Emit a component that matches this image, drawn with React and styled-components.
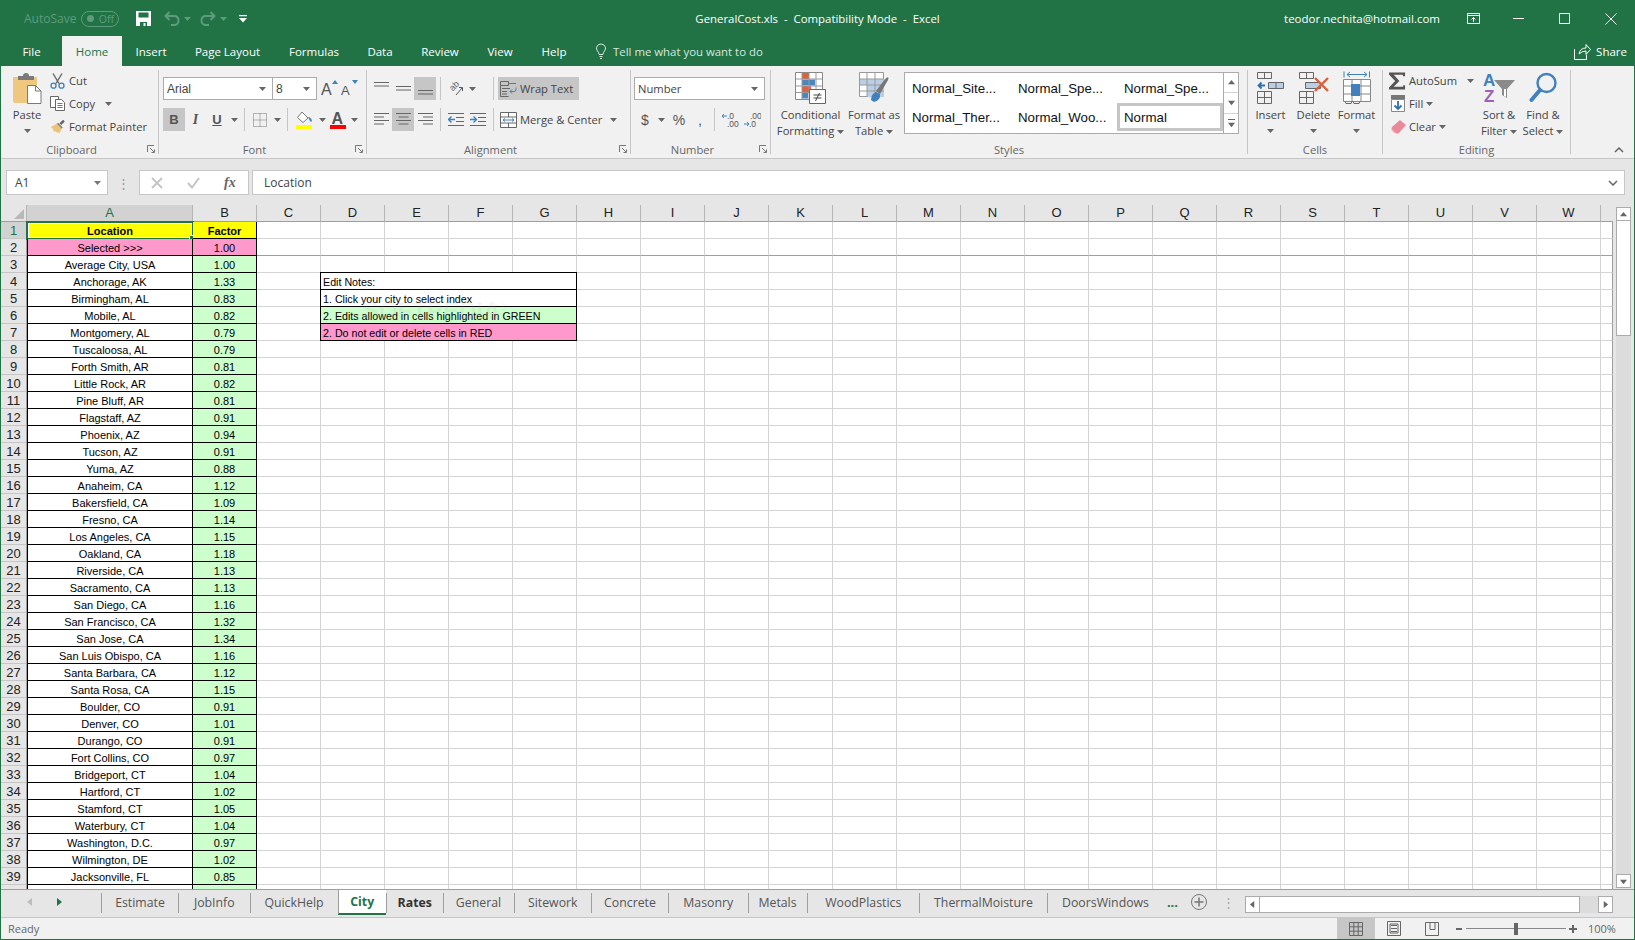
import React from 'react'
import styled, { createGlobalStyle } from 'styled-components'

/* ---------------------------------------DATA--------------------------------------- */

const cities = [
  ['Average City, USA', '1.00'], ['Anchorage, AK', '1.33'], ['Birmingham, AL', '0.83'], ['Mobile, AL', '0.82'],
  ['Montgomery, AL', '0.79'], ['Tuscaloosa, AL', '0.79'], ['Forth Smith, AR', '0.81'], ['Little Rock, AR', '0.82'],
  ['Pine Bluff, AR', '0.81'], ['Flagstaff, AZ', '0.91'], ['Phoenix, AZ', '0.94'], ['Tucson, AZ', '0.91'],
  ['Yuma, AZ', '0.88'], ['Anaheim, CA', '1.12'], ['Bakersfield, CA', '1.09'], ['Fresno, CA', '1.14'],
  ['Los Angeles, CA', '1.15'], ['Oakland, CA', '1.18'], ['Riverside, CA', '1.13'], ['Sacramento, CA', '1.13'],
  ['San Diego, CA', '1.16'], ['San Francisco, CA', '1.32'], ['San Jose, CA', '1.34'], ['San Luis Obispo, CA', '1.16'],
  ['Santa Barbara, CA', '1.12'], ['Santa Rosa, CA', '1.15'], ['Boulder, CO', '0.91'], ['Denver, CO', '1.01'],
  ['Durango, CO', '0.91'], ['Fort Collins, CO', '0.97'], ['Bridgeport, CT', '1.04'], ['Hartford, CT', '1.02'],
  ['Stamford, CT', '1.05'], ['Waterbury, CT', '1.04'], ['Washington, D.C.', '0.97'], ['Wilmington, DE', '1.02'],
  ['Jacksonville, FL', '0.85'], ['', ''],
]

const rows = [['Location', 'Factor'], ['Selected >>>', '1.00'], ...cities]
const letters = 'CDEFGHIJKLMNOPQRSTUVW'.split('')

const notes = {
  4: { text: 'Edit Notes:' },
  5: { text: '1. Click your city to select index' },
  6: { text: '2. Edits allowed in cells highlighted in GREEN', fill: '#ccffcc' },
  7: { text: '2. Do not edit or delete cells in RED', fill: '#ff99cc' },
}

const menuTabs = [
  ['File', 61], ['Home', 60, true], ['Insert', 58], ['Page Layout', 95], ['Formulas', 78], ['Data', 54],
  ['Review', 66], ['View', 54], ['Help', 54],
]

const sheetTabs = [
  ['Estimate', 77], ['JobInfo', 71.5], ['QuickHelp', 88], ['City', 48.5, 'active'], ['Rates', 56.5, 'bold'],
  ['General', 71], ['Sitework', 77.5], ['Concrete', 77], ['Masonry', 79.5], ['Metals', 59], ['WoodPlastics', 112.5],
  ['ThermalMoisture', 128], ['DoorsWindows', 116],
]

/* ---------------------------------------ICONS--------------------------------------- */

const Caret = ({ color = '#666' }) => (
  <svg width="7" height="4" viewBox="0 0 7 4"><path d="M0 0h7L3.5 4z" fill={color} /></svg>
)

const Launcher = () => (
  <svg width="8" height="8" viewBox="0 0 8 8" fill="none" stroke="#777">
    <path d="M.5 7V.5H7" /><path d="M3 3l4 4M4.5 7.5h3v-3" />
  </svg>
)

const SaveIcon = () => (
  <svg width="15" height="15" viewBox="0 0 15 15">
    <path d="M0 0h15v15H0z" fill="#fff" /><path d="M2.5 1.5h10v5h-10zM4 11h7v4H4z" fill="#217346" /><path d="M7.5 12h2v3h-2z" fill="#fff" />
  </svg>
)

const UndoIcon = ({ flip }) => (
  <svg width="16" height="15" viewBox="0 0 16 15" fill="none" stroke="#5f9b7d" strokeWidth="2" style={flip ? { transform: 'scaleX(-1)' } : undefined}>
    <path d="M5.5 1L1.5 5l4 4" /><path d="M2 5h8c3 0 4.5 2 4.5 4.5S12.5 14 10 14H7" />
  </svg>
)

const CustomizeIcon = () => (
  <svg width="8" height="8" viewBox="0 0 8 8"><path d="M0 0h8v1.3H0zM0 3h8L4 7.5z" fill="#fff" /></svg>
)

const PasteIcon = () => (
  <svg width="30" height="31" viewBox="0 0 30 31">
    <path d="M1 4h24v26H3q-2 0-2-2z" fill="#efc77f" />
    <path d="M6 3h5q0-3 3-3t3 3h5v4H6z" fill="#7a7a7a" />
    <path d="M15.5 12.5h8l5.5 5.5v12.5H15.5z" fill="#fff" stroke="#7a7a7a" />
    <path d="M23.5 12.5v5.5H29" fill="none" stroke="#7a7a7a" />
  </svg>
)

const ScissorsIcon = () => (
  <svg width="15" height="16" viewBox="0 0 15 16" fill="none">
    <path d="M3 .5l6 10M12 .5l-6 10" stroke="#666" strokeWidth="1.4" />
    <circle cx="3.5" cy="12.7" r="2.5" stroke="#3f80bd" strokeWidth="1.3" />
    <circle cx="11.5" cy="12.7" r="2.5" stroke="#3f80bd" strokeWidth="1.3" />
  </svg>
)

const CopyIcon = () => (
  <svg width="16" height="15" viewBox="0 0 16 15" fill="#fff" stroke="#666">
    <path d="M.5.5h8v11h-8z" />
    <path d="M5.5 3.5h6l3 3v8h-9z" />
    <path d="M7.5 7.5h5M7.5 9.5h5M7.5 11.5h5" stroke="#3f80bd" />
  </svg>
)

const PainterIcon = () => (
  <svg width="17" height="15" viewBox="0 0 17 15">
    <path d="M10 4l3-3q1-1 2 0t0 2l-3 3z" fill="#666" />
    <path d="M1 8l7-4 5 5-3 5.5-3-1-1.5-1L4 13 3.5 10.5z" fill="#ecc27a" />
    <path d="M7.5 4.5l1-1 5 5-1 1z" fill="#777" />
  </svg>
)

const LetterIcon = ({ size, up }) => (
  <svg width="18" height="17" viewBox="0 0 18 17">
    <text x="0" y="15" fontFamily="Liberation Sans" fontSize={size} fill="#555">A</text>
    <path d={up ? 'M11 4l3-4 3 4z' : 'M11 0h6l-3 4z'} fill="#3f80bd" />
  </svg>
)

const BorderIcon = () => (
  <svg width="14" height="14" viewBox="0 0 14 14" fill="none" stroke="#777" strokeDasharray="1 1">
    <path d="M.5.5h13v13H.5zM7 .5v13M.5 7h13" />
  </svg>
)

const FillIcon = () => (
  <svg width="17" height="18" viewBox="0 0 17 18">
    <path d="M6 1l6 6-5 4.5L1.5 6.5z" fill="#fff" stroke="#777" />
    <path d="M12 6q3 0 4 4-1 1.5-2 0z" fill="#3f80bd" />
    <path d="M0 14h16v4H0z" fill="#ffff00" />
  </svg>
)

const FontColorIcon = () => (
  <svg width="16" height="18" viewBox="0 0 16 18">
    <text x="1.5" y="13" fontFamily="Liberation Sans" fontWeight="700" fontSize="16" fill="#555">A</text>
    <path d="M0 14h16v4H0z" fill="#ff0000" />
  </svg>
)

const LinesIcon = ({ widths, top = 0 }) => (
  <svg width="15" height="16" viewBox="0 0 15 16" stroke="#666">
    {widths.map((w, i) => (
      <path key={i} d={`M${(15 - w[0]) * w[1]} ${top + i * 3.5 + 0.5}h${w[0]}`} />
    ))}
  </svg>
)

const OrientationIcon = () => (
  <svg width="17" height="17" viewBox="0 0 17 17" fill="none" stroke="#666">
    <text x="2" y="11" transform="rotate(-45 4 8)" fontFamily="Liberation Sans" fontSize="9" fill="#666" stroke="none">ab</text>
    <path d="M8 15l6-7M11 7.5h3.5V11" stroke="#555" />
  </svg>
)

const IndentIcon = ({ inward }) => (
  <svg width="16" height="14" viewBox="0 0 16 14" fill="none" stroke="#666">
    <path d="M0 .5h16M8 4.5h8M8 8.5h8M0 12.5h16" />
    {inward
      ? <path d="M0 6.5h6M3.5 3.5l3 3-3 3" stroke="#3f80bd" strokeWidth="1.4" />
      : <path d="M7 6.5H1M3.5 3.5l-3 3 3 3" stroke="#3f80bd" strokeWidth="1.4" />}
  </svg>
)

const WrapIcon = () => (
  <svg width="17" height="16" viewBox="0 0 17 16" fill="none" stroke="#666">
    <path d="M.5.5h8v4h-8zM.5 4.5v11h8" />
    <path d="M2 7.5h8M2 10.5h5M2 13h5" />
    <path d="M9 2.500h7M16 6.5v2a2 2 0 0 1-2 2h-4M12 8.5l-2 2 2 2" stroke="#3f80bd" />
  </svg>
)

const MergeIcon = () => (
  <svg width="17" height="16" viewBox="0 0 17 16" fill="#fff" stroke="#666">
    <path d="M.5.5h16v15H.5z" />
    <path d="M.5 5h16M.5 11h16M8.5.5V5M8.5 11v4.5" />
    <path d="M3 8h11M5 6.5L3 8l2 1.5M12 6.5L14 8l-2 1.5" stroke="#3f80bd" fill="none" />
  </svg>
)

const DecimalIcon = ({ more }) => (
  <svg width="18" height="18" viewBox="0 0 18 18">
    <text x={more ? 7 : 6} y="7.5" fontFamily="Liberation Sans" fontSize="8.5" fill="#555">{more ? '.00' : '.0'}</text>
    <text x="6" y="16" fontFamily="Liberation Sans" fontSize="8.5" fill="#555">{more ? '.0' : '.00'}</text>
    {more
      ? <path d="M1 13h5M4 11l2 2-2 2" stroke="#3f80bd" fill="none" />
      : <path d="M6 5H1M3 3L1 5l2 2" stroke="#3f80bd" fill="none" />}
  </svg>
)

const ConditionalIcon = () => (
  <svg width="31" height="32" viewBox="0 0 31 32">
    <path d="M.5.5h27v27H.5z" fill="#fff" stroke="#888" />
    <path d="M7 1h7v6H7z" fill="#e0603a" /><path d="M7 7.5h13v6H7z" fill="#4a86c0" />
    <path d="M7 14h9v6H7z" fill="#e0603a" /><path d="M7 20.5h6v6H7z" fill="#4a86c0" />
    <path d="M7 1v26M14 1v26M21 1v26M1 7h26M1 14h26M1 20.5h26" stroke="#999" fill="none" />
    <path d="M14.5 17.5h16v14h-16z" fill="#fff" stroke="#666" />
    <path d="M18.5 23h8M18.5 26h8M24.5 21l-4 8" stroke="#444" fill="none" />
  </svg>
)

const TableIcon = () => (
  <svg width="30" height="32" viewBox="0 0 30 32">
    <path d="M.5.5h24v24H.5z" fill="#fff" stroke="#999" />
    <path d="M1 7h24v18H8V13H1z" fill="#b9cfe6" />
    <path d="M8 1v24M16 1v24M1 7h24M1 13h24M1 19h24" stroke="#999" fill="none" />
    <path d="M17 19l9-12 3-2q1 1 0 3l-8 14z" fill="#777" />
    <path d="M12 28q0-6 5-8l4 2q1 6-6 8z" fill="#3f80bd" />
  </svg>
)

const InsertIcon = () => (
  <svg width="27" height="32" viewBox="0 0 27 32" fill="none" stroke="#666">
    <path d="M.5.5h14v6H.5zM7.5.5v6" />
    <path d="M11.5 10.5h15v6h-15z" fill="#b9cfe6" /><path d="M19 10.5v6" />
    <path d="M.5 19.5h14v12H.5zM7.5 19.5v12M.5 25.5h14" />
    <path d="M8 13.5H2M4.5 10.5l-3 3 3 3" stroke="#2f6fad" strokeWidth="1.8" />
  </svg>
)

const DeleteIcon = () => (
  <svg width="30" height="32" viewBox="0 0 30 32" fill="none" stroke="#666">
    <path d="M.5.5h14v6H.5zM7.5.5v6" />
    <path d="M6.5 10.5h15v6h-15z" fill="#b9cfe6" />
    <path d="M.5 19.5h14v12H.5zM7.5 19.5v12M.5 25.5h14" />
    <path d="M16 6l13 13M29 6L16 19" stroke="#d9603c" strokeWidth="2.4" />
  </svg>
)

const FormatIcon = () => (
  <svg width="28" height="33" viewBox="0 0 28 33" fill="none" stroke="#888">
    <path d="M1 .5v6M26.5.5v6M4 3.5h20M7 1L4 3.5 7 6M21 1l3 2.5L21 6" stroke="#3f80bd" />
    <path d="M.5 8.5h27v22H.5z" fill="#fff" />
    <path d="M9 8v22M18 8v22M.5 15h27M.5 23h27" />
    <path d="M8 13h9v12H8z" fill="#3f80bd" stroke="none" />
    <path d="M2 30.5l1 2h5l1-2M10 30.5l1 2h5l1-2" stroke="#666" />
  </svg>
)

const SigmaIcon = () => (
  <svg width="18" height="18" viewBox="0 0 18 18"><path d="M0 0h17v4h-2l-.5-1.5H5L11 9l-6 6h10v-1.5h2V18H0v-2l6.500-7L0 2z" fill="#555" /></svg>
)

const FillDownIcon = () => (
  <svg width="14" height="17" viewBox="0 0 14 17">
    <path d="M0 0h14v4H0z" fill="#777" /><path d="M.5 4.5h13v12H.5z" fill="#fff" stroke="#888" />
    <path d="M7 6v8M3.5 10.5L7 14l3.5-3.5" stroke="#2f6fad" strokeWidth="1.8" fill="none" />
  </svg>
)

const EraserIcon = () => (
  <svg width="15" height="14" viewBox="0 0 15 14"><path d="M9 0l6 5-7 8q-2 1-4 0L1 10q-1-1 0-3z" fill="#e98a9a" /><path d="M1 9l4 4H3L.5 10.5z" fill="#f2b7c0" /></svg>
)

const SortIcon = () => (
  <svg width="32" height="33" viewBox="0 0 32 33">
    <text x="0" y="15" fontFamily="Liberation Sans" fontWeight="700" fontSize="17" fill="#3f80bd">A</text>
    <text x="1" y="31" fontFamily="Liberation Sans" fontWeight="700" fontSize="17" fill="#9a62b8">Z</text>
    <path d="M11 9h21l-8 9v9l-5-3v-6z" fill="#8a8a8a" /><path d="M21 18v7l2 1v-8z" fill="#fff" />
  </svg>
)

const SearchIcon = () => (
  <svg width="28" height="32" viewBox="0 0 28 32" fill="none" stroke="#3f80bd">
    <circle cx="17.5" cy="11" r="9" strokeWidth="2.4" />
    <path d="M11 18L2.5 28" strokeWidth="4" strokeLinecap="round" />
  </svg>
)

const BulbIcon = () => (
  <svg width="10" height="16" viewBox="0 0 10 16" fill="none" stroke="#d5e8dd">
    <path d="M3 11.5q0-2-1.5-3.5Q0 6 .6 4.2 1.500 1 5 1t4.400 3.200Q10 6 8.500 8 7 9.500 7 11.5zM3.500 13.5h3M4 15.5h2" />
  </svg>
)

const ShareIcon = () => (
  <svg width="17" height="17" viewBox="0 0 17 17" fill="none" stroke="#fff">
    <path d="M.5 6v10.5h12V12" /><path d="M5 11q1-6 7-6V1.5l4.500 5-4.500 5V8q-4 0-7 3z" />
  </svg>
)

const RestoreIcon = () => (
  <svg width="13" height="11" viewBox="0 0 13 11" fill="none" stroke="#fff">
    <path d="M.5.5h12v10H.5zM.5 2.5h12M6.5 9V4.5M4.5 6.5l2-2 2 2" />
  </svg>
)

const TriangleArrow = ({ dir, color = '#666', size = 7 }) => {
  const paths = { up: 'M0 6h8L4 1z', down: 'M0 2h8L4 7z', left: 'M6 0v8L1 4z', right: 'M2 0v8l5-4z' }
  return <svg width={size} height={size} viewBox="0 0 8 8"><path d={paths[dir]} fill={color} /></svg>
}

/* -----------------------------------------------------COMPONENT------------------------------------------------ */

const Big = ({ width, icon, lines, caret, caretBelow }) => (
  <BigButton $width={width}>
    <BigIcon>{icon}</BigIcon>
    <BigLabel>
      {lines.map((l, i) => <div key={l}>{l}{caret && i === lines.length - 1 && <> <Caret /></>}</div>)}
    </BigLabel>
    {caretBelow && <CaretLine><Caret /></CaretLine>}
  </BigButton>
)

const GroupFoot = ({ label, launcher, pad = 0 }) => (
  <Foot $pad={pad} $launcher={launcher}>
    <span>{label}</span>
    {launcher && <LaunchSlot><Launcher /></LaunchSlot>}
  </Foot>
)

const Btn = ({ w, on, children }) => <ToolButton $w={w} $on={on}>{children}</ToolButton>
const Drop = ({ w = 12 }) => <ToolButton $w={w}><Caret /></ToolButton>

function Ribbon() {
  return (
    <RibbonBar>
      <Group $width={158} $pad={9}>
        <Body>
          <Big width={34} icon={<PasteIcon />} lines={['Paste']} caretBelow />
          <SideList $left={6}>
            <SideRow><SideIcon><ScissorsIcon /></SideIcon>Cut</SideRow>
            <SideRow><SideIcon><CopyIcon /></SideIcon>Copy<CaretGap $w={7}><Caret /></CaretGap></SideRow>
            <SideRow><SideIcon><PainterIcon /></SideIcon>Format Painter</SideRow>
          </SideList>
        </Body>
        <GroupFoot label="Clipboard" launcher pad={9} />
      </Group>

      <Group $width={208} $pad={4}>
        <Rows>
          <ToolRow>
            <Combo $w={110} $font>Arial<Caret /></Combo>
            <Combo $w={45} $font $joined>8<Caret /></Combo>
            <Spacer $w={2} />
            <Btn w={21}><LetterIcon size={16} up /></Btn>
            <Btn w={20}><LetterIcon size={13} /></Btn>
          </ToolRow>
          <ToolRow>
            <Btn w={22} on><Bold>B</Bold></Btn>
            <Btn w={21}><Italic>I</Italic></Btn>
            <Btn w={22}><Under>U</Under></Btn>
            <Drop />
            <VSep />
            <Btn w={22}><BorderIcon /></Btn>
            <Drop />
            <VSep />
            <Btn w={24}><FillIcon /></Btn>
            <Drop />
            <Btn w={20}><FontColorIcon /></Btn>
            <Drop />
          </ToolRow>
        </Rows>
        <GroupFoot label="Font" launcher pad={4} />
      </Group>

      <Group $width={264} $pad={3}>
        <Rows>
          <ToolRow>
            <Btn w={22}><LinesIcon widths={[[15, 0], [15, 0]]} top={1} /></Btn>
            <Btn w={22}><LinesIcon widths={[[15, 0], [15, 0]]} top={5} /></Btn>
            <Btn w={22} on><LinesIcon widths={[[15, 0], [15, 0]]} top={9} /></Btn>
            <VSep />
            <Btn w={22}><OrientationIcon /></Btn>
            <Drop w={10} />
            <Spacer $w={12} />
            <VSep />
            <TextTool $w={81} $on><WrapIcon />Wrap Text</TextTool>
          </ToolRow>
          <ToolRow>
            <Btn w={22}><LinesIcon widths={[[15, 0], [10, 0], [15, 0], [10, 0]]} top={1} /></Btn>
            <Btn w={22} on><LinesIcon widths={[[15, 0], [10, 0.5], [15, 0], [10, 0.5]]} top={1} /></Btn>
            <Btn w={22}><LinesIcon widths={[[15, 0], [10, 1], [15, 0], [10, 1]]} top={1} /></Btn>
            <VSep />
            <Btn w={22}><IndentIcon /></Btn>
            <Btn w={22}><IndentIcon inward /></Btn>
            <VSep />
            <TextTool $w={127}><MergeIcon />Merge &amp; Center<CaretGap $w={5}><Caret /></CaretGap></TextTool>
          </ToolRow>
        </Rows>
        <GroupFoot label="Alignment" launcher pad={3} />
      </Group>

      <Group $width={140} $pad={3}>
        <Rows>
          <ToolRow><Combo $w={131}>Number<Caret /></Combo></ToolRow>
          <ToolRow>
            <Btn w={22}><Glyph>$</Glyph></Btn>
            <Drop w={10} />
            <Spacer $w={2} />
            <Btn w={22}><Glyph>%</Glyph></Btn>
            <Btn w={20}><Glyph>,</Glyph></Btn>
            <VSep />
            <Btn w={22}><DecimalIcon /></Btn>
            <Btn w={22}><DecimalIcon more /></Btn>
          </ToolRow>
        </Rows>
        <GroupFoot label="Number" launcher pad={3} />
      </Group>

      <Group $width={477} $pad={6}>
        <Body>
          <Big width={67} icon={<ConditionalIcon />} lines={['Conditional', 'Formatting']} caret />
          <Big width={60} icon={<TableIcon />} lines={['Format as', 'Table']} caret />
          <Gallery>
            <GalleryGrid>
              {['Normal_Site...', 'Normal_Spe...', 'Normal_Spe...', 'Normal_Ther...', 'Normal_Woo...', 'Normal'].map((s, i) => (
                <StyleCell key={i} $on={s === 'Normal'}>{s}</StyleCell>
              ))}
            </GalleryGrid>
            <GalleryScroll>
              <GalleryBtn><TriangleArrow dir="up" /></GalleryBtn>
              <GalleryBtn><TriangleArrow dir="down" /></GalleryBtn>
              <GalleryBtn><MoreBar /><TriangleArrow dir="down" /></GalleryBtn>
            </GalleryScroll>
          </Gallery>
        </Body>
        <GroupFoot label="Styles" pad={6} />
      </Group>

      <Group $width={135} $pad={1}>
        <Body>
          <Big width={43} icon={<InsertIcon />} lines={['Insert']} caretBelow />
          <Big width={43} icon={<DeleteIcon />} lines={['Delete']} caretBelow />
          <Big width={43} icon={<FormatIcon />} lines={['Format']} caretBelow />
        </Body>
        <GroupFoot label="Cells" pad={1} />
      </Group>

      <Group $width={188} $pad={6}>
        <Body>
          <SideList $width={88}>
            <SideRow><SideIcon $w={17}><SigmaIcon /></SideIcon>AutoSum<CaretGap $w={7}><Caret /></CaretGap></SideRow>
            <SideRow><SideIcon $w={17} $left={2}><FillDownIcon /></SideIcon>Fill <Caret /></SideRow>
            <SideRow><SideIcon $w={17} $left={2}><EraserIcon /></SideIcon>Clear <Caret /></SideRow>
          </SideList>
          <Big width={44} icon={<SortIcon />} lines={['Sort &', 'Filter']} caret />
          <Big width={44} icon={<SearchIcon />} lines={['Find &', 'Select']} caret />
        </Body>
        <GroupFoot label="Editing" pad={6} />
      </Group>

      <Collapse>
        <svg width="10" height="6" viewBox="0 0 10 6" fill="none" stroke="#666" strokeWidth="1.5"><path d="M1 5l4-4 4 4" /></svg>
      </Collapse>
    </RibbonBar>
  )
}

function Sheet() {
  return (
    <SheetRow>
      <GridBox>
        <Grid>
          <HeadCell $corner><Corner /></HeadCell>
          <HeadCell $on>A</HeadCell>
          <HeadCell>B</HeadCell>
          {letters.map((l) => <HeadCell key={l}>{l}</HeadCell>)}
          <HeadCell $blank />

          {rows.map(([place, factor], idx) => {
            const n = idx + 1
            const note = notes[n]
            const fill = n === 1 ? '#ffff00' : n === 2 ? '#ff99cc' : null
            return (
              <React.Fragment key={n}>
                <RowHead $on={n === 1}>{n}</RowHead>
                <DataCell $fill={fill} $bold={n === 1} $first>
                  {place}
                  {n === 1 && <Selection><Handle /></Selection>}
                </DataCell>
                <DataCell $fill={fill || '#ccffcc'} $bold={n === 1}>{factor}</DataCell>
                <Blank $freeze={n === 2} />
                {note ? (
                  <>
                    <NoteCell $fill={note.fill}>
                      {note.text}
                      {n === 5 && <Watermark>SOFTPEDIA<sup>®</sup></Watermark>}
                    </NoteCell>
                    {letters.slice(5).map((l) => <Blank key={l} />)}
                  </>
                ) : (
                  letters.slice(1).map((l) => <Blank key={l} $freeze={n === 2} />)
                )}
                <LastCell $freeze={n === 2} />
              </React.Fragment>
            )
          })}
        </Grid>
      </GridBox>
      <VScroll>
        <ScrollBtn><TriangleArrow dir="up" /></ScrollBtn>
        <VThumb />
        <VTrack />
        <ScrollBtn><TriangleArrow dir="down" /></ScrollBtn>
      </VScroll>
    </SheetRow>
  )
}

function TabStrip() {
  return (
    <Strip>
      <TabNav>
        <TriangleArrow dir="left" color="#bdbdbd" size={8} />
        <TriangleArrow dir="right" color="#217346" size={8} />
      </TabNav>
      {sheetTabs.map(([name, w, mode]) => <SheetTab key={name} $w={w} $mode={mode}>{name}</SheetTab>)}
      <More>...</More>
      <AddSheet>
        <svg width="16" height="16" viewBox="0 0 16 16" fill="none" stroke="#777"><circle cx="8" cy="8" r="7.5" /><path d="M8 3.5v9M3.5 8h9" strokeWidth="1.5" /></svg>
      </AddSheet>
      <Grip>⋮</Grip>
      <HScroll>
        <ScrollBtn $h><TriangleArrow dir="left" /></ScrollBtn>
        <HThumb />
        <HTrack />
        <ScrollBtn $h><TriangleArrow dir="right" /></ScrollBtn>
      </HScroll>
    </Strip>
  )
}

export default function App() {
  return (
    <>
      <GlobalStyle />
      <Window>
        <TitleBar>
          <TitleLeft>
            <AutoSave>AutoSave</AutoSave>
            <Toggle><Knob />Off</Toggle>
            <QuickIcon $w={16} $left={16}><SaveIcon /></QuickIcon>
            <QuickIcon $w={16} $left={13}><UndoIcon /></QuickIcon>
            <QuickIcon $w={7} $left={4}><Caret color="#5f9b7d" /></QuickIcon>
            <QuickIcon $w={16} $left={9}><UndoIcon flip /></QuickIcon>
            <QuickIcon $w={7} $left={4}><Caret color="#5f9b7d" /></QuickIcon>
            <QuickIcon $w={8} $left={12}><CustomizeIcon /></QuickIcon>
          </TitleLeft>
          <TitleText>GeneralCost.xls&nbsp; - &nbsp;Compatibility Mode&nbsp; - &nbsp;Excel</TitleText>
          <TitleRight>
            <Account>teodor.nechita@hotmail.com</Account>
            <WinButton><RestoreIcon /></WinButton>
            <WinButton><svg width="12" height="2" viewBox="0 0 12 2"><path d="M0 .5h11" stroke="#fff" /></svg></WinButton>
            <WinButton><svg width="12" height="12" viewBox="0 0 12 12"><path d="M.5.5h10v10H.5z" stroke="#fff" fill="none" /></svg></WinButton>
            <WinButton><svg width="12" height="12" viewBox="0 0 12 12"><path d="M.5.5l11 11M11.5.5l-11 11" stroke="#fff" /></svg></WinButton>
          </TitleRight>
        </TitleBar>

        <MenuBar>
          {menuTabs.map(([name, w, on]) => <MenuTab key={name} $w={w} $on={on}>{name}</MenuTab>)}
          <TellMe><BulbIcon />Tell me what you want to do</TellMe>
          <Share><ShareIcon />Share</Share>
        </MenuBar>

        <Ribbon />

        <FormulaStrip>
          <NameBox>A1<Caret color="#777" /></NameBox>
          <FormulaDots>⋮</FormulaDots>
          <FormulaButtons>
            <svg width="12" height="12" viewBox="0 0 12 12"><path d="M1 1l10 10M11 1L1 11" stroke="#c4c4c4" strokeWidth="1.8" /></svg>
            <svg width="13" height="12" viewBox="0 0 13 12" fill="none"><path d="M1 6l4 4.5L12 1" stroke="#c4c4c4" strokeWidth="2" /></svg>
            <FxMark>fx</FxMark>
          </FormulaButtons>
          <FormulaInput>
            Location
            <svg width="10" height="6" viewBox="0 0 10 6" fill="none" stroke="#666" strokeWidth="1.5"><path d="M1 1l4 4 4-4" /></svg>
          </FormulaInput>
        </FormulaStrip>

        <Sheet />
        <TabStrip />

        <StatusBar>
          <Ready>Ready</Ready>
          <ViewBtn $on>
            <svg width="14" height="14" viewBox="0 0 14 14" fill="none" stroke="#666"><path d="M.5.5h13v13H.5zM4.8.5v13M9.2.5v13M.5 4.8h13M.5 9.2h13" /></svg>
          </ViewBtn>
          <ViewBtn>
            <svg width="14" height="15" viewBox="0 0 14 15" fill="none" stroke="#666"><path d="M.5.5h13v14H.5zM4 4.5h6M4 7.5h6M4 10.5h6M3 3h8v9H3z" /></svg>
          </ViewBtn>
          <ViewBtn>
            <svg width="14" height="14" viewBox="0 0 14 14" fill="none" stroke="#666"><path d="M.5.5h13v13H.5zM5 .5v7h5v-7" /></svg>
          </ViewBtn>
          <ZoomSign $left={5}>
            <svg width="6" height="6" viewBox="0 0 6 6"><path d="M0 2h6v2H0z" fill="#666" /></svg>
          </ZoomSign>
          <ZoomSlider><ZoomThumb /></ZoomSlider>
          <ZoomSign $left={3}>
            <svg width="8" height="8" viewBox="0 0 8 8"><path d="M3 0h2v3h3v2H5v3H3V5H0V3h3z" fill="#666" /></svg>
          </ZoomSign>
          <ZoomValue>100%</ZoomValue>
        </StatusBar>
      </Window>
    </>
  )
}

/* -----------------------------------------------------STYLE------------------------------------------------ */

const UI = `"Open Sans", "Noto Sans", sans-serif`
const CELL = `"Liberation Sans", Arial, sans-serif`

const GlobalStyle = createGlobalStyle`
  html, body { margin: 0; padding: 0; overflow: hidden; }
  * { box-sizing: border-box; }
`

const Window = styled.div`
  width: 1635px;
  height: 940px;
  border: 1px solid #217346;
  display: flex;
  flex-direction: column;
  background: #e6e6e6;
  font-family: ${UI};
  color: #444;
  overflow: hidden;
`

const TitleBar = styled.div`
  height: 35px;
  flex: none;
  background: #217346;
  display: grid;
  grid-template-columns: 1fr auto 1fr;
  align-items: center;
`

const TitleLeft = styled.div`
  display: flex;
  align-items: center;
`

const AutoSave = styled.span`
  margin-left: 23px;
  width: 57px;
  font-size: 12px;
  color: #5f9b7d;
`

const Toggle = styled.span`
  width: 38px;
  height: 16px;
  border: 1px solid #5f9b7d;
  border-radius: 8px;
  display: flex;
  align-items: center;
  justify-content: flex-end;
  padding-right: 4px;
  font-size: 10.5px;
  color: #5f9b7d;
  position: relative;
`

const Knob = styled.i`
  position: absolute;
  left: 5px;
  top: 3.5px;
  width: 7px;
  height: 7px;
  border-radius: 50%;
  background: #5f9b7d;
`

const QuickIcon = styled.span`
  width: ${(p) => p.$w}px;
  margin-left: ${(p) => p.$left}px;
  display: flex;
  align-items: center;
  justify-content: center;
`

const TitleText = styled.div`
  color: #fff;
  font-size: 11.4px;
  white-space: nowrap;
`

const TitleRight = styled.div`
  display: flex;
  align-items: center;
  justify-content: flex-end;
`

const Account = styled.span`
  color: #fff;
  font-size: 11.5px;
  margin-right: 10px;
  white-space: nowrap;
`

const WinButton = styled.span`
  width: 46px;
  height: 35px;
  display: flex;
  align-items: center;
  justify-content: center;
`

const MenuBar = styled.div`
  height: 30px;
  flex: none;
  background: #217346;
  display: flex;
  align-items: stretch;
`

const MenuTab = styled.div`
  width: ${(p) => p.$w}px;
  display: flex;
  align-items: center;
  justify-content: center;
  font-size: 11.5px;
  color: ${(p) => (p.$on ? '#217346' : '#fff')};
  background: ${(p) => (p.$on ? '#f1f1f1' : 'transparent')};
`

const TellMe = styled.div`
  display: flex;
  align-items: center;
  gap: 7px;
  margin-left: 15px;
  font-size: 11.4px;
  color: #d5e8dd;
`

const Share = styled.div`
  margin-left: auto;
  display: flex;
  align-items: center;
  gap: 5px;
  margin-right: 7px;
  font-size: 11.5px;
  color: #fff;
`

const RibbonBar = styled.div`
  height: 93px;
  flex: none;
  background: #f1f1f1;
  border-bottom: 1px solid #c6c6c6;
  display: flex;
  position: relative;
  font-size: 11.2px;
`

const Group = styled.section`
  width: ${(p) => p.$width}px;
  flex: none;
  padding-left: ${(p) => p.$pad}px;
  margin-top: 4px;
  height: 84px;
  border-right: 1px solid #c6c6c6;
  display: flex;
  flex-direction: column;
`

const Body = styled.div`
  flex: 1;
  min-height: 0;
  display: flex;
  align-items: flex-start;
`

const Rows = styled.div`
  flex: 1;
  min-height: 0;
  display: flex;
  flex-direction: column;
  gap: 8px;
  padding-top: 7px;
`

const Foot = styled.div`
  height: 16px;
  flex: none;
  margin-left: -${(p) => p.$pad}px;
  margin-bottom: -3px;
  display: grid;
  grid-template-columns: ${(p) => (p.$launcher ? '1fr 16px' : '1fr')};
  align-items: center;
  text-align: center;
  font-size: 11.2px;
  color: #666;
`

const LaunchSlot = styled.span`
  justify-self: end;
  display: flex;
  margin-right: 3px;
`

const BigButton = styled.div`
  width: ${(p) => p.$width}px;
  flex: none;
  display: flex;
  flex-direction: column;
  align-items: center;
`

const BigIcon = styled.div`
  height: 34px;
  display: flex;
  align-items: flex-end;
  justify-content: center;
`

const BigLabel = styled.div`
  margin-top: 3px;
  text-align: center;
  line-height: 16px;
  white-space: nowrap;
  svg { vertical-align: middle; }
`

const CaretLine = styled.div`
  height: 16px;
  display: flex;
  align-items: center;
`

const SideList = styled.div`
  margin-left: ${(p) => p.$left || 0}px;
  margin-top: -1px;
  width: ${(p) => (p.$width ? `${p.$width}px` : 'auto')};
  flex: none;
  display: flex;
  flex-direction: column;
`

const SideRow = styled.div`
  height: 23px;
  display: flex;
  align-items: center;
  gap: 3px;
  white-space: nowrap;
`

const SideIcon = styled.span`
  width: ${(p) => p.$w || 16}px;
  flex: none;
  padding-left: ${(p) => p.$left || 0}px;
  display: flex;
  align-items: center;
`

const CaretGap = styled.span`
  margin-left: ${(p) => p.$w}px;
  display: inline-flex;
  align-items: center;
`

const ToolRow = styled.div`
  height: 23px;
  display: flex;
  align-items: center;
`

const ToolButton = styled.div`
  width: ${(p) => p.$w}px;
  height: 23px;
  flex: none;
  display: flex;
  align-items: center;
  justify-content: center;
  background: ${(p) => (p.$on ? '#c6c6c6' : 'transparent')};
`

const TextTool = styled.div`
  width: ${(p) => p.$w}px;
  height: 23px;
  flex: none;
  padding-left: 2px;
  display: flex;
  align-items: center;
  gap: 3px;
  white-space: nowrap;
  background: ${(p) => (p.$on ? '#c6c6c6' : 'transparent')};
`

const VSep = styled.span`
  width: 1px;
  height: 23px;
  flex: none;
  margin: 0 4px;
  background: #c6c6c6;
`

const Spacer = styled.span`
  width: ${(p) => p.$w}px;
  flex: none;
`

const Combo = styled.div`
  width: ${(p) => p.$w}px;
  height: 23px;
  flex: none;
  margin-left: ${(p) => (p.$joined ? '-1px' : 0)};
  background: #fff;
  border: 1px solid #ababab;
  padding: 0 6px 0 3px;
  display: flex;
  align-items: center;
  justify-content: space-between;
  font-family: ${(p) => (p.$font ? CELL : UI)};
  font-size: ${(p) => (p.$font ? '12px' : '11.2px')};
`

const Bold = styled.b`
  font-family: ${CELL};
  font-size: 13px;
  color: #555;
`

const Italic = styled.i`
  font-family: "Liberation Serif", serif;
  font-weight: 700;
  font-size: 14px;
  color: #555;
`

const Under = styled.span`
  font-family: ${CELL};
  font-weight: 700;
  font-size: 13px;
  color: #555;
  text-decoration: underline;
`

const Glyph = styled.span`
  font-size: 14px;
  font-family: ${CELL};
  color: #555;
`

const Gallery = styled.div`
  width: 335px;
  height: 62px;
  margin-top: 2px;
  background: #fff;
  border: 1px solid #ababab;
  display: flex;
`

const GalleryGrid = styled.div`
  width: 318px;
  display: grid;
  grid-template-columns: repeat(3, 106px);
  grid-template-rows: 30px 28px;
`

const StyleCell = styled.div`
  display: flex;
  align-items: center;
  padding-left: ${(p) => (p.$on ? '4px' : '7px')};
  font-family: ${CELL};
  font-size: 13.3px;
  color: #111;
  border: ${(p) => (p.$on ? '3px solid #c6c6c6' : 'none')};
`

const GalleryScroll = styled.div`
  flex: 1;
  border-left: 1px solid #ababab;
  display: flex;
  flex-direction: column;
`

const GalleryBtn = styled.div`
  flex: 1;
  display: flex;
  flex-direction: column;
  align-items: center;
  justify-content: center;
  & + & { border-top: 1px solid #d4d4d4; }
`

const MoreBar = styled.i`
  width: 7px;
  height: 1px;
  background: #666;
  margin-bottom: 1px;
`

const Collapse = styled.div`
  position: absolute;
  right: 10px;
  bottom: 5px;
  display: flex;
`

const FormulaStrip = styled.div`
  height: 46px;
  flex: none;
  padding: 11px 9px 10px 5px;
  display: flex;
  align-items: stretch;
`

const NameBox = styled.div`
  width: 102px;
  background: #fff;
  border: 1px solid #c6c6c6;
  padding: 0 6px 0 8px;
  display: flex;
  align-items: center;
  justify-content: space-between;
  font-size: 12px;
`

const FormulaDots = styled.div`
  width: 31px;
  display: flex;
  align-items: center;
  justify-content: center;
  color: #999;
  font-size: 13px;
`

const FormulaButtons = styled.div`
  width: 110px;
  background: #fff;
  border: 1px solid #c6c6c6;
  display: flex;
  align-items: center;
  gap: 24px;
  padding-left: 11px;
  margin-right: 3px;
`

const FxMark = styled.i`
  font-family: "Liberation Serif", serif;
  font-size: 14px;
  font-weight: 700;
  color: #666;
`

const FormulaInput = styled.div`
  flex: 1;
  background: #fff;
  border: 1px solid #c6c6c6;
  padding: 0 6px 0 11px;
  display: flex;
  align-items: center;
  justify-content: space-between;
  font-size: 12px;
`

const SheetRow = styled.div`
  flex: 1;
  min-height: 0;
  display: flex;
`

const GridBox = styled.div`
  width: 1612px;
  flex: none;
  overflow: hidden;
`

const Grid = styled.div`
  display: grid;
  grid-template-columns: 26px 166px 64px repeat(21, 64px) 12px;
  grid-auto-rows: 17px;
  font-family: ${CELL};
  background: #fff;
`

const HeadCell = styled.div`
  position: relative;
  background: ${(p) => (p.$on ? '#d2d2d2' : '#e6e6e6')};
  color: ${(p) => (p.$on ? '#217346' : '#222')};
  border-bottom: 1px solid #9e9e9e;
  border-right: ${(p) => (p.$blank ? 'none' : '1px solid #b5b5b5')};
  padding-bottom: 1px;
  display: flex;
  align-items: center;
  justify-content: center;
  font-size: 13px;
`

const Corner = styled.i`
  position: absolute;
  right: 2px;
  bottom: 2px;
  width: 0;
  height: 0;
  border-left: 10px solid transparent;
  border-bottom: 10px solid #b8b8b8;
`

const RowHead = styled.div`
  background: ${(p) => (p.$on ? '#d2d2d2' : '#e6e6e6')};
  color: ${(p) => (p.$on ? '#217346' : '#222')};
  border-bottom: 1px solid #c6c6c6;
  border-right: 1px solid #9e9e9e;
  display: flex;
  align-items: center;
  justify-content: center;
  font-size: 13px;
`

const DataCell = styled.div`
  position: relative;
  background: ${(p) => p.$fill || '#fff'};
  border-right: 1px solid #000;
  border-bottom: 1px solid #000;
  border-left: ${(p) => (p.$first ? '1px solid #000' : 'none')};
  padding-top: 1px;
  display: flex;
  align-items: center;
  justify-content: center;
  font-size: 11px;
  font-weight: ${(p) => (p.$bold ? 700 : 400)};
  color: #000;
`

const Selection = styled.span`
  position: absolute;
  top: -1px;
  left: -2px;
  right: -2px;
  bottom: -2px;
  border: 2px solid #217346;
  box-shadow: inset 0 0 0 1px #fff;
`

const Handle = styled.i`
  position: absolute;
  right: -4px;
  bottom: -4px;
  width: 6px;
  height: 6px;
  background: #217346;
  outline: 1px solid #fff;
`

const Blank = styled.div`
  background: #fff;
  border-right: 1px solid #d4d4d4;
  border-bottom: 1px solid ${(p) => (p.$freeze ? '#9e9e9e' : '#d4d4d4')};
`

const LastCell = styled(Blank)`
  border-right: 1px solid #9e9e9e;
`

const NoteCell = styled.div`
  grid-column: span 4;
  position: relative;
  margin: -1px 0 0 -1px;
  background: ${(p) => p.$fill || '#fff'};
  border: 1px solid #000;
  padding: 1px 0 0 2px;
  display: flex;
  align-items: center;
  font-size: 10.7px;
  color: #000;
`

const Watermark = styled.span`
  position: absolute;
  z-index: 1;
  left: 42px;
  top: 5px;
  font-size: 24px;
  line-height: 24px;
  font-weight: 700;
  color: rgba(170, 170, 170, 0.13);
  white-space: nowrap;
  sup { font-size: 9px; }
`

const VScroll = styled.div`
  width: 15px;
  flex: none;
  margin: 2px 0 1px 3px;
  display: flex;
  flex-direction: column;
`

const ScrollBtn = styled.div`
  ${(p) => (p.$h ? 'width: 15px;' : 'height: 14px;')}
  flex: none;
  background: #fff;
  border: 1px solid #ababab;
  display: flex;
  align-items: center;
  justify-content: center;
`

const VThumb = styled.div`
  height: 115px;
  flex: none;
  background: #fff;
  border: 1px solid #ababab;
  border-top: none;
`

const VTrack = styled.div`
  flex: 1;
  background: #dcdcdc;
`

const Strip = styled.div`
  height: 28px;
  flex: none;
  background: #e6e6e6;
  border-top: 1px solid #9e9e9e;
  display: flex;
  align-items: flex-start;
`

const TabNav = styled.div`
  width: 100px;
  flex: none;
  height: 24px;
  padding-left: 25px;
  display: flex;
  align-items: center;
  gap: 21px;
`

const SheetTab = styled.div`
  width: ${(p) => p.$w}px;
  height: ${(p) => (p.$mode === 'active' ? '25px' : '20px')};
  margin-top: ${(p) => (p.$mode === 'active' ? 0 : '3px')};
  padding-bottom: ${(p) => (p.$mode === 'active' ? 0 : '2px')};
  flex: none;
  display: flex;
  align-items: center;
  justify-content: center;
  font-size: 12.3px;
  font-weight: ${(p) => (p.$mode ? 700 : 400)};
  color: ${(p) => (p.$mode === 'active' ? '#217346' : p.$mode === 'bold' ? '#333' : '#555')};
  background: ${(p) => (p.$mode === 'active' ? '#fff' : 'transparent')};
  border-left: 1px solid #9e9e9e;
  border-bottom: ${(p) => (p.$mode === 'active' ? '2px solid #217346' : 'none')};
`

const More = styled.div`
  width: 28px;
  flex: none;
  height: 24px;
  padding-right: 13px;
  display: flex;
  align-items: center;
  justify-content: flex-end;
  font-size: 13px;
  font-weight: 700;
  color: #217346;
`

const AddSheet = styled.div`
  width: 16px;
  flex: none;
  height: 24px;
  display: flex;
  align-items: center;
  justify-content: center;
`

const Grip = styled.div`
  width: 16px;
  flex: none;
  height: 24px;
  margin-left: 13px;
  display: flex;
  align-items: center;
  justify-content: center;
  color: #aaa;
  font-size: 13px;
`

const HScroll = styled.div`
  width: 368px;
  flex: none;
  height: 17px;
  margin: 6px 0 0 9px;
  display: flex;
  align-items: stretch;
`

const HThumb = styled.div`
  width: 320px;
  flex: none;
  background: #fff;
  border: 1px solid #ababab;
  border-left: none;
`

const HTrack = styled.div`
  flex: 1;
  background: #dcdcdc;
`

const StatusBar = styled.div`
  height: 22px;
  flex: none;
  background: #f1f1f1;
  border-top: 1px solid #c6c6c6;
  display: flex;
  align-items: center;
`

const Ready = styled.span`
  font-size: 11px;
  color: #666;
  margin-left: 7px;
  margin-right: auto;
`

const ViewBtn = styled.div`
  width: 38px;
  align-self: stretch;
  display: flex;
  align-items: center;
  justify-content: center;
  background: ${(p) => (p.$on ? '#c6c6c6' : 'transparent')};
`

const ZoomSign = styled.span`
  margin-left: ${(p) => p.$left}px;
  display: flex;
`

const ZoomSlider = styled.div`
  width: 100px;
  height: 1px;
  margin-left: 4px;
  background: #888;
  display: flex;
  justify-content: center;
  align-items: center;
`

const ZoomThumb = styled.i`
  width: 4px;
  height: 12px;
  flex: none;
  background: #666;
`

const ZoomValue = styled.span`
  width: 54px;
  margin-left: 3px;
  padding-left: 8px;
  font-size: 11px;
  color: #666;
`
